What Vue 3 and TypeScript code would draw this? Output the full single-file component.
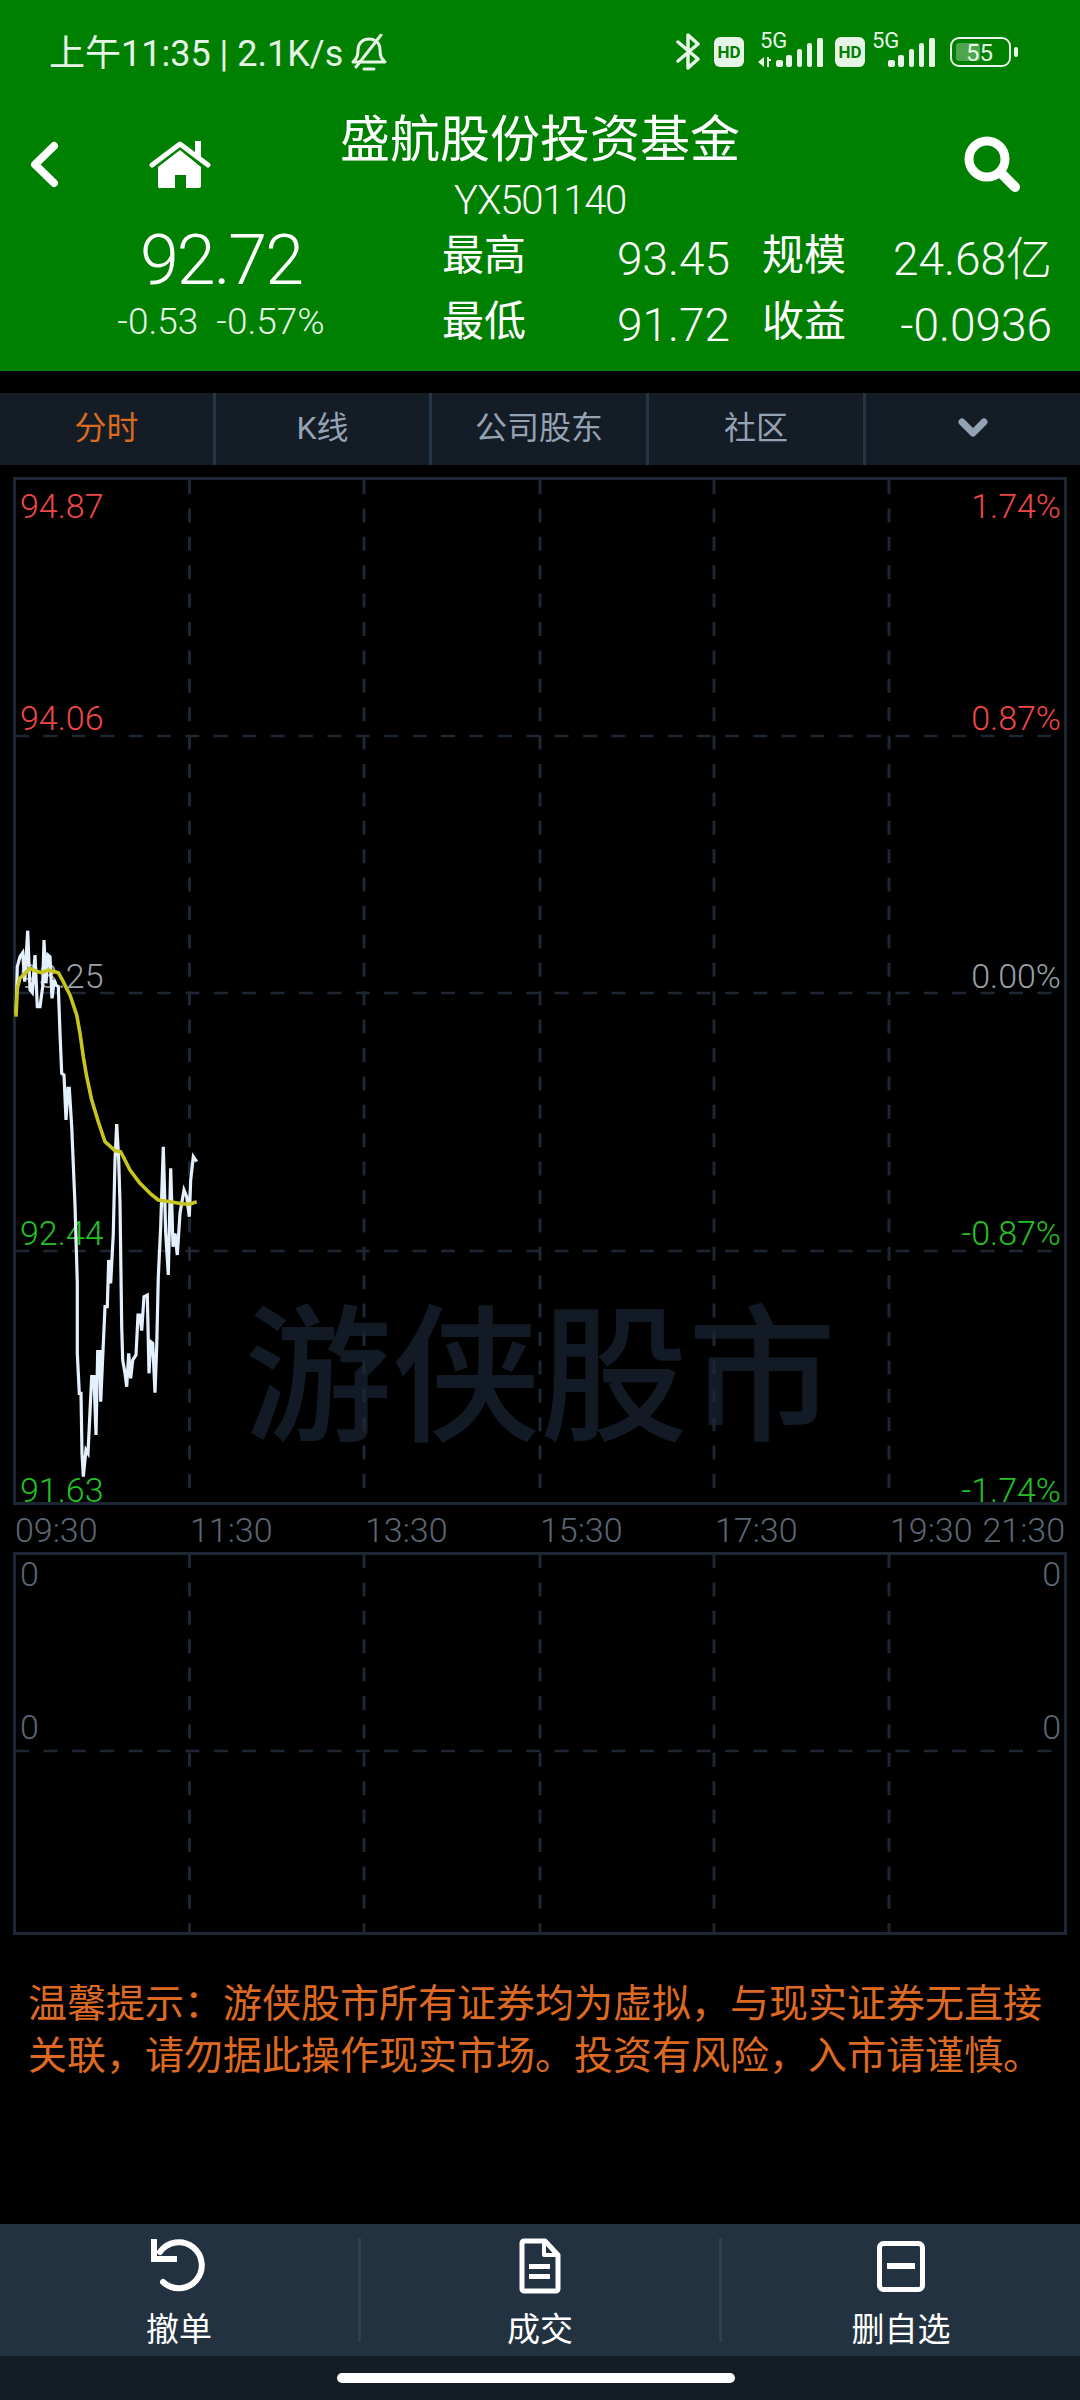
<script setup lang="ts">
const tabs = ['分时', 'K线', '公司股东', '社区']

interface Axis { text: string; base: number; tone: string }
const left: Axis[] = [
  { text: '94.87', base: 518, tone: 'red' },
  { text: '94.06', base: 730, tone: 'red' },
  { text: '93.25', base: 988, tone: 'mid' },
  { text: '92.44', base: 1245, tone: 'green' },
  { text: '91.63', base: 1502, tone: 'green' },
]
const right: Axis[] = [
  { text: '1.74%', base: 518, tone: 'red' },
  { text: '0.87%', base: 730, tone: 'red' },
  { text: '0.00%', base: 988, tone: 'mid' },
  { text: '-0.87%', base: 1245, tone: 'green' },
  { text: '-1.74%', base: 1502, tone: 'green' },
]
const labelTop = (base: number): string => `${base - 477 - 3 - 29}px`

const priceRaw: [number, number][] = [
  [48, 340], [52, 200], [60, 170], [68, 158], [74, 245], [83, 92], [90, 270], [97, 278], [105, 165], [112, 320],
  [120, 320], [128, 260], [132, 120], [138, 250], [144, 165], [150, 170], [156, 295], [163, 240], [168, 255], [175, 260],
  [180, 400], [185, 520], [192, 525], [198, 660], [204, 565], [208, 565], [215, 680], [225, 915], [232, 1150], [232, 1360],
  [238, 1480], [243, 1480], [246, 1660], [250, 1730], [258, 1650], [264, 1660], [275, 1430], [282, 1430], [288, 1605], [293, 1355],
  [300, 1355], [302, 1505], [315, 1220], [322, 1220], [326, 1080], [332, 1150], [340, 1000], [345, 780], [350, 672], [356, 780],
  [360, 910], [365, 1280], [368, 1380], [375, 1420], [380, 1460], [386, 1360], [392, 1435], [398, 1380], [408, 1365], [414, 1245],
  [420, 1245], [425, 1292], [432, 1190], [442, 1185], [447, 1420], [452, 1325], [458, 1330], [465, 1478], [470, 1340], [475, 1130],
  [482, 980], [490, 740], [497, 1000], [505, 1125], [512, 805], [519, 1040], [525, 1000], [532, 1065], [540, 940], [552, 870],
  [560, 890], [568, 950], [572, 840], [580, 770], [590, 785],
]
const avgRaw: [number, number][] = [
  [48, 350], [52, 265], [60, 235], [70, 225], [90, 205], [105, 212], [125, 218], [145, 210], [175, 218], [190, 245],
  [210, 285], [230, 345], [240, 400], [250, 470], [260, 530], [275, 600], [295, 665], [315, 725], [345, 752], [362, 755],
  [390, 810], [420, 850], [450, 880], [475, 900], [510, 905], [550, 912], [570, 912], [590, 905],
]
const toPoints = (raw: [number, number][]): string =>
  raw.map(([x, y]) => `${(x / 3).toFixed(1)},${(900 + y / 3).toFixed(1)}`).join(' ')
const pricePoints = toPoints(priceRaw)
const avgPoints = toPoints(avgRaw)

const verticals = [189.5, 364, 540, 714, 889]
const times = ['09:30', '11:30', '13:30', '15:30', '17:30', '19:30']
</script>

<template>
  <div class="page">
    <header class="head">
      <div class="status">
        <div class="status-left">
          <span>上午11:35 | 2.1K/s</span>
          <svg class="bell" width="36" height="38" viewBox="0 0 36 38" fill="none" stroke="#e6f5e6" stroke-width="3" stroke-linecap="round" stroke-linejoin="round">
            <path d="M2 28c3-3 5-5 5-12 0-7 5-11 11-11 4 0 7 2 9 4 1.500 2 2 5 2 7 0 7 2 9 5 12Z" />
            <path d="M30 1 5 33" />
            <path d="M13 35h10" />
          </svg>
        </div>
        <svg class="status-icons" width="344" height="46" viewBox="678 26 344 46">
          <g fill="none" stroke="#e6f5e6" stroke-width="3.500" stroke-linejoin="round" stroke-linecap="round">
            <path d="M680 42 700 59 690 68V35L700 44 680 61" />
          </g>
          <rect x="716" y="37" width="30" height="30" rx="6" fill="#e6f5e6" />
          <text x="731" y="57.500" class="hd">HD</text>
          <text x="762" y="48" class="five">5G</text>
          <path d="M766 57v10l-6-5zM769 57h2v2h2v2h-2v6h-2z" fill="#e6f5e6" />
          <g fill="#e6f5e6">
            <rect x="778" y="60" width="7" height="7" rx="2" />
            <rect x="788" y="55" width="6" height="12" rx="2" />
            <rect x="799" y="49" width="5" height="18" rx="2" />
            <rect x="809" y="43" width="5" height="24" rx="2" />
            <rect x="819" y="38" width="6" height="29" rx="1.500" />
          </g>
          <rect x="837" y="37" width="30" height="30" rx="6" fill="#e6f5e6" />
          <text x="852" y="57.500" class="hd">HD</text>
          <text x="874" y="48" class="five">5G</text>
          <g fill="#e6f5e6">
            <rect x="890" y="60" width="7" height="7" rx="2" />
            <rect x="900" y="55" width="6" height="12" rx="2" />
            <rect x="911" y="49" width="5" height="18" rx="2" />
            <rect x="921" y="43" width="5" height="24" rx="2" />
            <rect x="931" y="38" width="6" height="29" rx="1.500" />
          </g>
          <rect x="953" y="38" width="59" height="28" rx="8" fill="none" stroke="#e6f5e6" stroke-width="2" />
          <rect x="958" y="43" width="24" height="18" rx="3" fill="#4da64d" />
          <text x="981.500" y="60.500" class="batt">55</text>
          <rect x="1016" y="47" width="4" height="10" rx="2" fill="#e6f5e6" />
        </svg>
      </div>

      <div class="nav">
        <div class="nav-left">
          <svg width="32" height="50" viewBox="0 0 32 50" fill="none" stroke="#fff" stroke-width="8" stroke-linecap="round" stroke-linejoin="round">
            <path d="M25 6 6 24.500 25 43" />
          </svg>
          <svg width="62" height="50" viewBox="0 0 62 50" fill="#fff">
            <rect x="46" y="1" width="6" height="16" />
            <path d="M31 10 52 27V46a2 2 0 0 1-2 2H37V35H26V48H12a2 2 0 0 1-3-2V27Z" />
            <path d="M3 25 31 4 59 25" fill="none" stroke="#fff" stroke-width="5" stroke-linecap="round" stroke-linejoin="round" />
          </svg>
        </div>
        <div class="title-block">
          <div class="title">盛航股份投资基金</div>
          <div class="code">YX501140</div>
        </div>
        <div class="nav-right">
          <svg width="56" height="56" viewBox="0 0 56 56" fill="none" stroke="#fff" stroke-linecap="round">
            <circle cx="23" cy="23" r="18" stroke-width="9" />
            <path d="M37 37 51 51" stroke-width="10" />
          </svg>
        </div>
      </div>

      <div class="stats">
        <div class="now">
          <div class="now-price">92.72</div>
          <div class="now-change"><span>-0.53</span><span>-0.57%</span></div>
        </div>
        <div class="k">最高</div>
        <div class="v">93.45</div>
        <div class="k k-far">规模</div>
        <div class="v v-far">24.68亿</div>
        <div class="k">最低</div>
        <div class="v">91.72</div>
        <div class="k k-far">收益</div>
        <div class="v v-far">-0.0936</div>
      </div>
    </header>

    <nav class="tabs">
      <div v-for="(t, i) in tabs" :key="t" class="tab" :class="{ on: i === 0 }">{{ t }}</div>
      <div class="tab tab-more">
        <svg width="32" height="22" viewBox="0 0 32 22" fill="none" stroke="#94a3b3" stroke-width="7" stroke-linecap="round" stroke-linejoin="round">
          <path d="M5 5 16 16 27 5" />
        </svg>
      </div>
    </nav>

    <section class="chart main">
      <div class="mark">游侠股市</div>
      <span v-for="a in left" :key="a.text" class="ax ax-l" :class="a.tone" :style="{ top: labelTop(a.base) }">{{ a.text }}</span>
      <span v-for="a in right" :key="a.text" class="ax ax-r" :class="a.tone" :style="{ top: labelTop(a.base) }">{{ a.text }}</span>
      <svg class="plot" width="1054" height="1028" viewBox="13 477 1054 1028" fill="none">
        <line v-for="x in verticals" :key="x" :x1="x" :x2="x" y1="480" y2="1503" class="gv" />
        <line v-for="y in [736, 993, 1251]" :key="y" x1="15" x2="1056" :y1="y" :y2="y" class="gh" />
        <polyline :points="pricePoints" stroke="#e4f0fb" stroke-width="3.200" stroke-linejoin="miter" />
        <polyline :points="avgPoints" stroke="#c6c61e" stroke-width="3.600" stroke-linejoin="round" />
      </svg>
    </section>

    <div class="times">
      <span v-for="t in times" :key="t" class="time">{{ t }}</span>
      <span class="time-last">21:30</span>
    </div>

    <section class="chart vol">
      <span class="ax ax-l low vol-a">0</span>
      <span class="ax ax-r low vol-a">0</span>
      <span class="ax ax-l low vol-b">0</span>
      <span class="ax ax-r low vol-b">0</span>
      <svg class="plot" width="1054" height="383" viewBox="13 1552 1054 383" fill="none">
        <line v-for="x in verticals" :key="x" :x1="x" :x2="x" y1="1554" y2="1933" class="gv" />
        <line x1="15" x2="1056" y1="1751" y2="1751" class="gh" />
      </svg>
    </section>

    <p class="notice">温馨提示&#xFF1A;游侠股市所有证券均为虚拟&#xFF0C;与现实证券无直接关联&#xFF0C;请勿据此操作现实市场。投资有风险&#xFF0C;入市请谨慎。</p>

    <footer class="actions">
      <div class="action">
        <svg width="56" height="56" viewBox="0 0 56 56" fill="none" stroke="#fff" stroke-width="6">
          <path d="M9 14A23 23 0 1 1 12 44" stroke-linecap="round" />
          <path d="M3 1V21H26" />
        </svg>
        <span>撤单</span>
      </div>
      <div class="action">
        <svg width="42" height="56" viewBox="0 0 42 56" fill="none" stroke="#fff" stroke-width="5" stroke-linejoin="round">
          <path d="M5 3H26L39 17V51a2 2 0 0 1-2 2H5a2 2 0 0 1-2-2V5a2 2 0 0 1 2-2Z" />
          <path d="M25 2V17H40" stroke-width="4" />
          <path d="M10 28.500H31M10 38.500H31" stroke-width="5" />
        </svg>
        <span>成交</span>
      </div>
      <div class="action">
        <svg width="48" height="56" viewBox="0 0 48 56" fill="none" stroke="#fff" stroke-width="5">
          <rect x="2.500" y="5.500" width="43" height="46" rx="4" />
          <path d="M10 28H38" stroke-width="6" />
        </svg>
        <span>删自选</span>
      </div>
    </footer>
    <div class="home-bar"><i class="pill"></i></div>
  </div>
</template>

<style>
html, body { margin: 0; background: #000; }
</style>

<style scoped>
.page {
  width: 1080px;
  height: 2400px;
  display: flex;
  flex-direction: column;
  background: #000;
  color: #fff;
  font-family: Roboto, "Noto Sans CJK SC", sans-serif;
  overflow: hidden;
}
.head {
  height: 371px;
  flex: none;
  background: #008000;
}
.status {
  height: 104px;
  box-sizing: border-box;
  padding: 0 60px 0 49px;
  display: flex;
  align-items: center;
  justify-content: space-between;
}
.status-icons { margin-bottom: 6px; }
.status-left {
  display: flex;
  align-items: center;
  gap: 8px;
  font-size: 36px;
  color: #e6f5e6;
  margin-top: -4px;
}
.bell { margin-top: 6px; }
.nav {
  height: 122px;
  display: grid;
  grid-template-columns: 1fr auto 1fr;
}
.nav-left {
  display: flex;
  gap: 88px;
  padding: 36px 0 0 29px;
  align-items: flex-start;
}
.nav-right {
  display: flex;
  justify-content: flex-end;
  padding: 32px 60px 0 0;
}
.title-block { text-align: center; }
.title {
  font-size: 50px;
  line-height: 72px;
}
.code {
  font-size: 40px;
  line-height: 50px;
  font-weight: 300;
  letter-spacing: -1.2px;
}
.stats {
  display: grid;
  grid-template-columns: 442px 84px 204px 116px 204px;
  grid-template-rows: 66px 66px;
}
.now {
  grid-row: span 2;
  text-align: center;
}
.now-price {
  font-size: 70px;
  line-height: 68px;
  font-weight: 300;
  letter-spacing: -2px;
}
.now-change {
  display: flex;
  justify-content: center;
  gap: 18px;
  font-size: 37px;
  line-height: 56px;
  font-weight: 300;
  color: #e6f5e6;
}
.k {
  font-size: 42px;
  line-height: 60px;
}
.k-far { text-align: right; }
.v {
  font-size: 46px;
  line-height: 66px;
  text-align: right;
  font-weight: 300;
}
.v-far { margin-right: -2px; }
.tabs {
  margin-top: 22px;
  height: 72px;
  flex: none;
  display: grid;
  grid-template-columns: 216px 216px 217px 217px 214px;
  background: #141c26;
}
.tab {
  box-sizing: border-box;
  border-right: 3px solid #263545;
  display: flex;
  align-items: center;
  justify-content: center;
  font-size: 32px;
  line-height: 40px;
  padding-bottom: 3px;
  color: #94a3b3;
}
.tab.on { color: #d96a20; }
.tab-more { border-right: 0; }
.chart {
  position: relative;
  box-sizing: border-box;
  width: 1054px;
  margin-left: 13px;
  flex: none;
  border: 3px solid #1c2733;
}
.main {
  margin-top: 12px;
  height: 1028px;
}
.vol { height: 383px; }
.plot {
  position: absolute;
  left: -3px;
  top: -3px;
}
.gv {
  stroke: #1c2733;
  stroke-width: 3;
  stroke-dasharray: 14 14.400;
}
.gh {
  stroke: #1c2733;
  stroke-width: 2.500;
  stroke-dasharray: 14 14.400;
}
.mark {
  position: absolute;
  left: 0;
  right: 0;
  top: 814px;
  text-align: center;
  font-size: 148px;
  line-height: 170px;
  font-weight: 500;
  color: #121b25;
}
.ax {
  position: absolute;
  font-size: 34px;
  line-height: 34px;
  font-weight: 300;
}
.ax-l { left: 4px; }
.ax-r { right: 3px; }
.red { color: #ef4747; }
.green { color: #24c224; }
.mid { color: #98a0a8; }
.low { color: #5a6673; }
.vol-a { top: 2px; }
.vol-b { top: 155px; }
.times {
  height: 47px;
  flex: none;
  box-sizing: border-box;
  padding: 8px 15px 0 15px;
  display: flex;
  font-size: 34px;
  line-height: 34px;
  font-weight: 300;
  color: #5a6673;
}
.time { width: 175px; flex: none; }
.time:nth-child(6) { width: auto; }
.time-last { margin-left: auto; }
.notice {
  margin: 0;
  padding: 39px 28px 0;
  font-family: "Noto Sans CJK SC", sans-serif;
  font-size: 39px;
  line-height: 52px;
  color: #dd6a20;
}
.actions {
  margin-top: auto;
  height: 132px;
  flex: none;
  box-sizing: border-box;
  padding: 14px 0;
  display: grid;
  grid-template-columns: 361px 361px 358px;
  background: #233240;
}
.action {
  display: flex;
  flex-direction: column;
  align-items: center;
  justify-content: space-between;
  height: 104px;
  font-size: 33px;
  line-height: 40px;
  border-right: 3px solid #2f3f50;
}
.action span { margin-bottom: -8px; }
.action:last-child { border-right: 0; }
.home-bar {
  height: 44px;
  flex: none;
  background: #141c26;
  display: flex;
  justify-content: center;
  padding: 17px 8px 0 0;
  box-sizing: border-box;
}
.pill {
  width: 398px;
  height: 10px;
  border-radius: 5px;
  background: #fff;
}
.five {
  font-size: 22px;
  fill: #e6f5e6;
  font-family: Roboto, sans-serif;
}
.hd {
  font-size: 17px;
  font-weight: 700;
  text-anchor: middle;
  fill: #008000;
  font-family: Roboto, sans-serif;
}
.batt {
  font-size: 24px;
  text-anchor: middle;
  fill: #e6f5e6;
  font-family: Roboto, sans-serif;
}
</style>
